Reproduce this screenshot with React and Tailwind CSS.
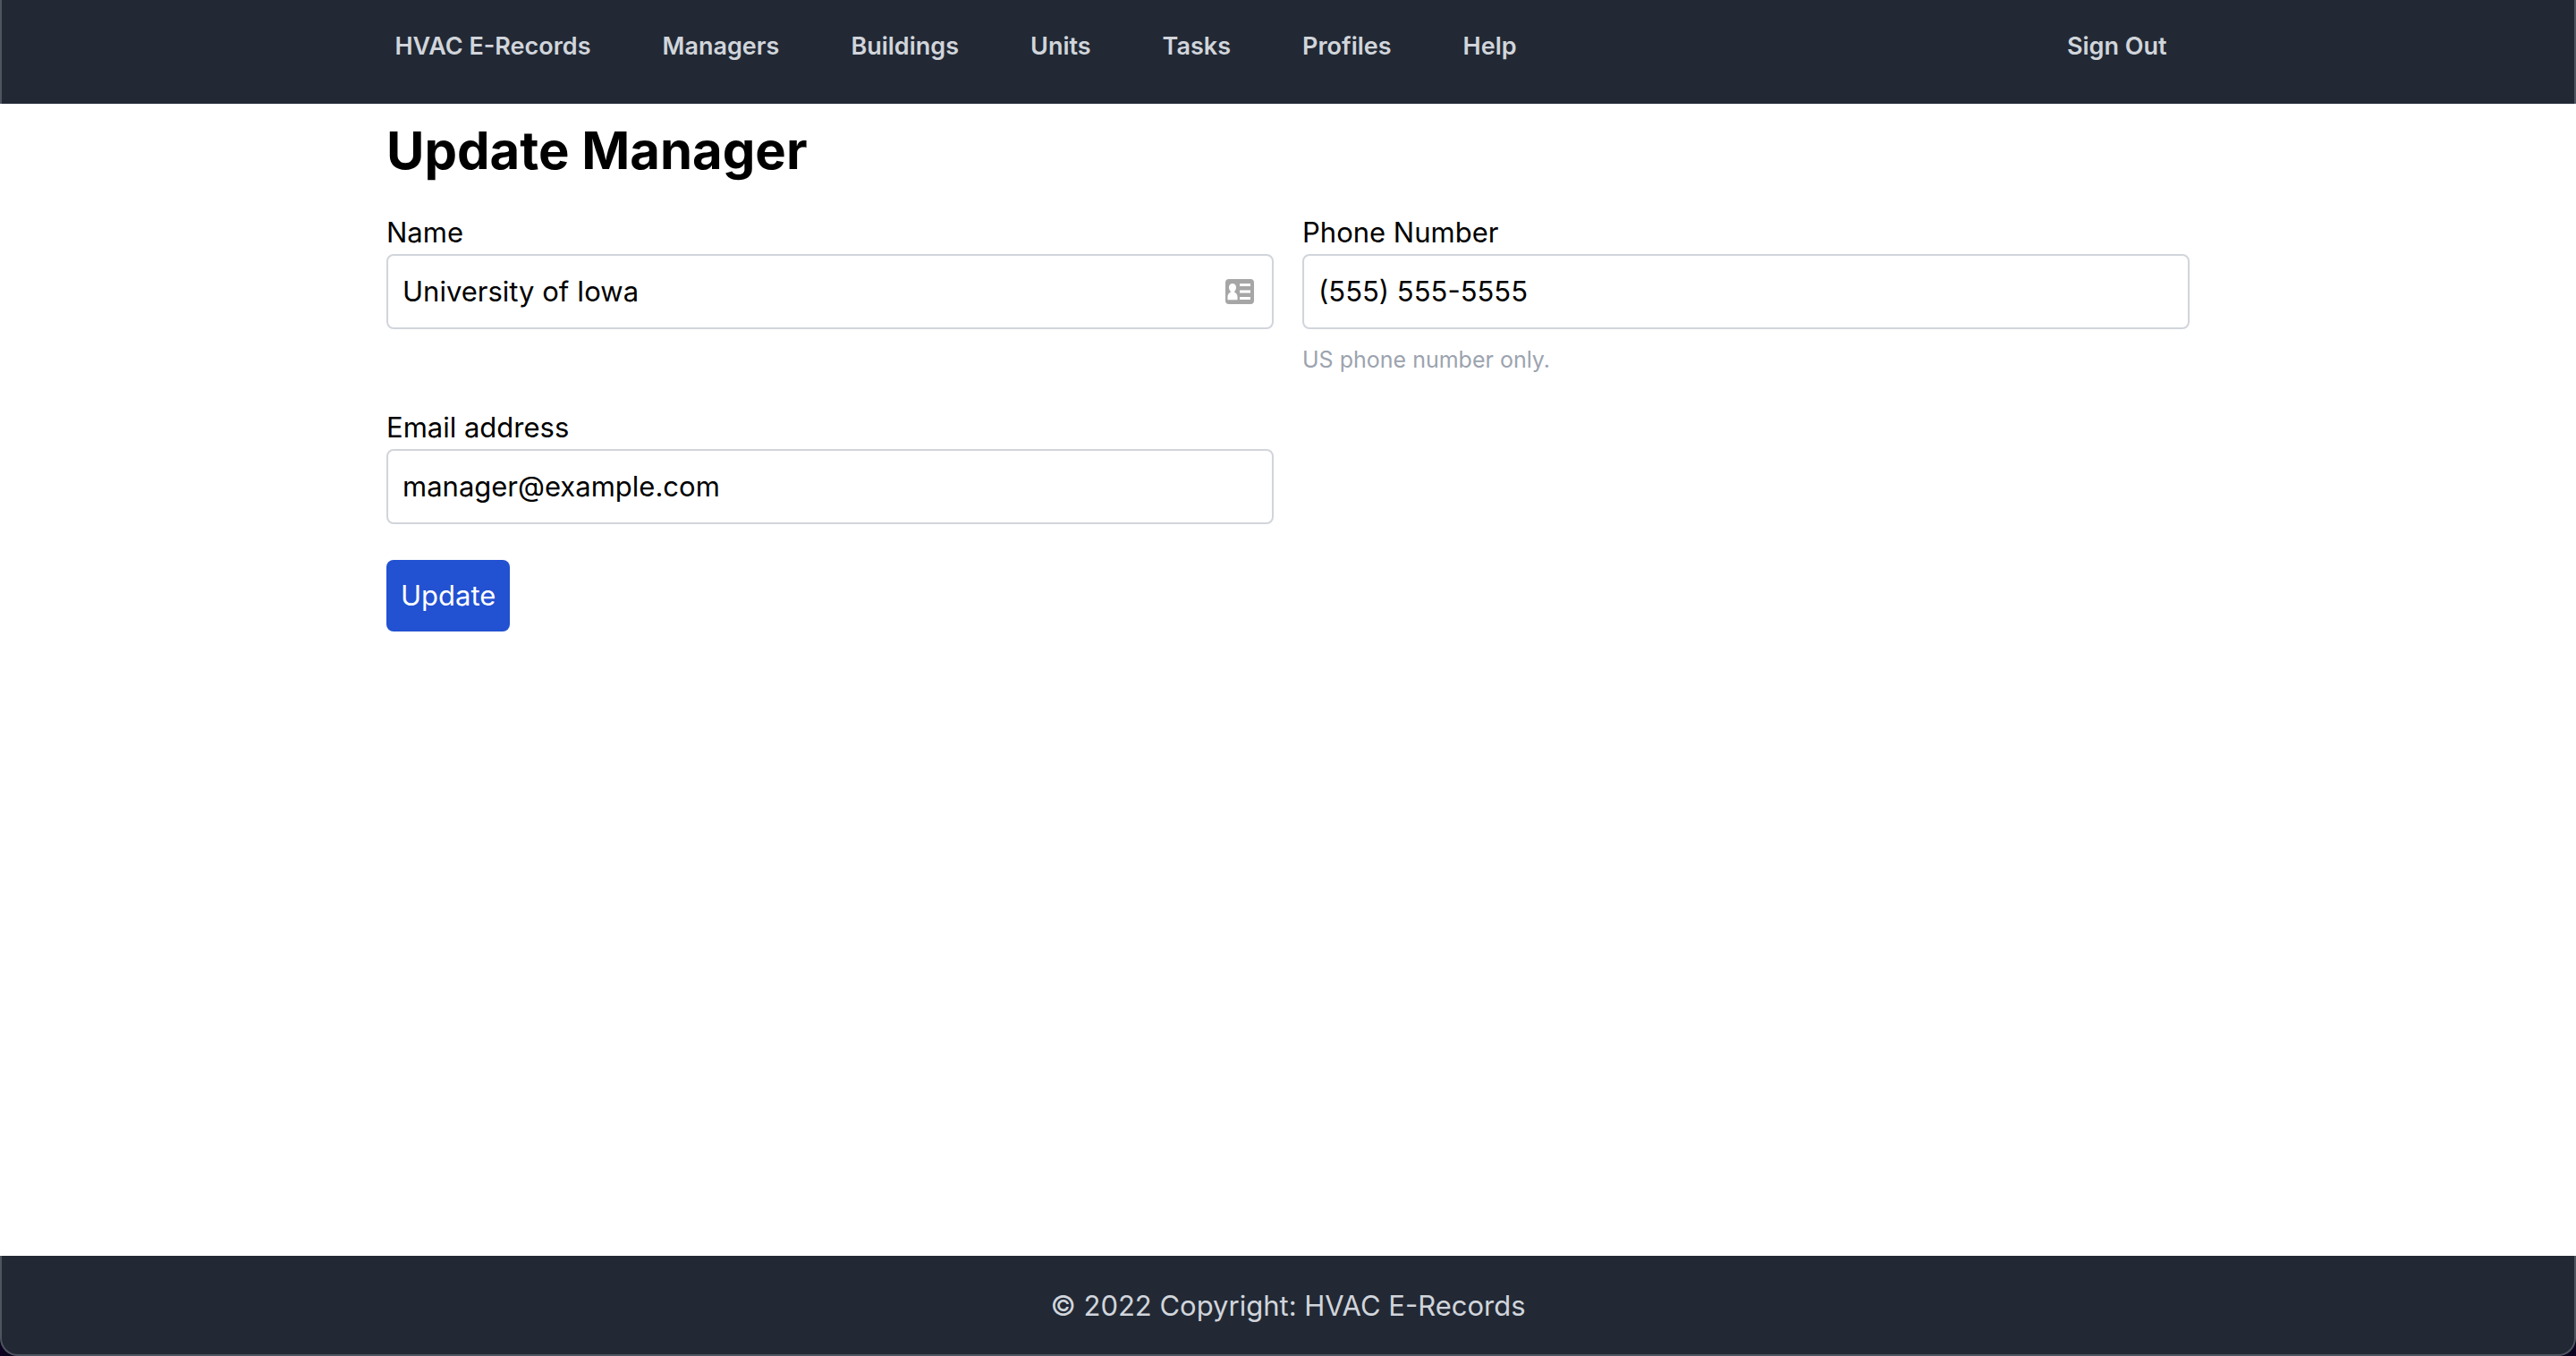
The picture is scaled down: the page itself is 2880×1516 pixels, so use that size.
const NAV_LINKS = ["HVAC E-Records", "Managers", "Buildings", "Units", "Tasks", "Profiles", "Help"];

function ContactCardIcon() {
  return (
    <svg
      viewBox="0 0 32 28"
      className="pointer-events-none absolute right-[22px] top-1/2 h-7 w-8 -translate-y-1/2"
      aria-hidden="true"
    >
      <rect width="32" height="28" rx="4" fill="#a6a6a6" />
      <g fill="#ffffff">
        <path d="M8 5c2.500 0 4 1.800 4 4.200 0 2-.9 3.600-1.800 4.500v1.100c2 .8 3.300 2.500 3.300 5.200v3.300h-11V20c0-2.700 1.300-4.400 3.300-5.200v-1.100C4.900 12.800 4 11.200 4 9.200 4 6.800 5.500 5 8 5z" />
        <rect x="16" y="5" width="12" height="3" />
        <rect x="16" y="12.500" width="12" height="3" />
        <rect x="16" y="20" width="12" height="3" />
      </g>
    </svg>
  );
}

function Field({ id, label, type = "text", value, hint, icon }) {
  return (
    <div>
      <label htmlFor={id} className="block">
        {label}
      </label>
      <div className="relative">
        <input
          id={id}
          type={type}
          defaultValue={value}
          className="block w-full rounded-lg border-2 border-[#d1d5db] bg-white p-4 leading-[48px] outline-none"
        />
        {icon}
      </div>
      {hint && <p className="mt-3.5 text-[25px] leading-[40px] text-[#9ca3af]">{hint}</p>}
    </div>
  );
}

export default function App() {
  return (
    <div className="flex min-h-screen flex-col bg-white font-['Inter',sans-serif] text-[31px] leading-[48px] text-black">
      <header className="border-x-2 border-[#4e555f] bg-[#222935]">
        <nav className="mx-auto flex w-[70%] items-center justify-between pt-8 pr-6 pb-11 pl-2 text-[27px] font-semibold leading-[40px] text-[#d1d5db]">
          <ul className="flex gap-20">
            {NAV_LINKS.map((name) => (
              <li key={name}>
                <a href="#">{name}</a>
              </li>
            ))}
          </ul>
          <a href="#">Sign Out</a>
        </nav>
      </header>

      <main className="mx-auto w-[70%] grow pt-4">
        <h1 className="text-[58px] font-bold leading-[72px]">Update Manager</h1>
        <form className="mt-8" onSubmit={(e) => e.preventDefault()}>
          <div className="grid grid-cols-2 gap-8">
            <Field id="name" label="Name" value="University of Iowa" icon={<ContactCardIcon />} />
            <Field
              id="phone"
              label="Phone Number"
              type="tel"
              value="(555) 555-5555"
              hint="US phone number only."
            />
            <Field id="email" label="Email address" type="email" value="manager@example.com" />
          </div>
          <button type="submit" className="mt-10 rounded-lg bg-[#2251d1] p-4 text-white">
            Update
          </button>
        </form>
      </main>

      <div className="bg-[#0c0420]">
        <footer className="rounded-b-[20px] border-x-2 border-b-2 border-[#4e555f] bg-[#222935] pt-8 pb-[30px] text-center text-[#d1d5db]">
          © 2022 Copyright: HVAC E-Records
        </footer>
      </div>
    </div>
  );
}
